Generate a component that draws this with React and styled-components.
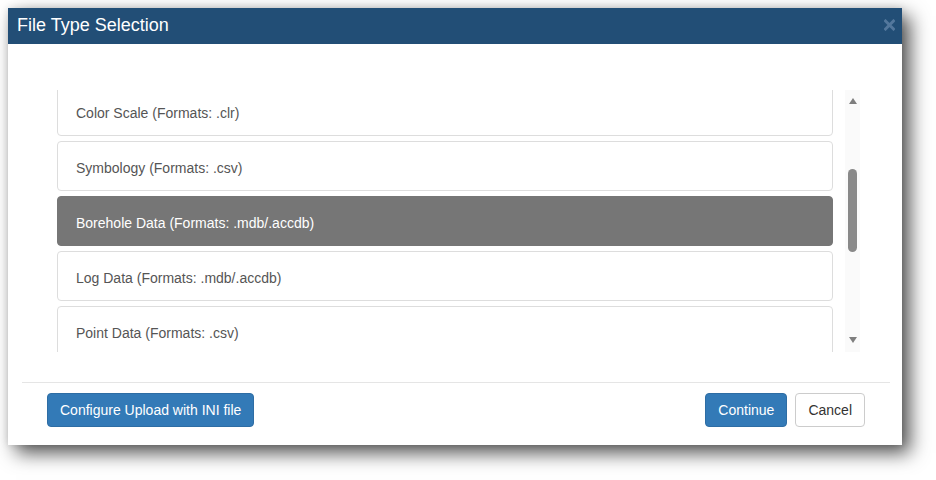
import React from "react";
import styled, { createGlobalStyle } from "styled-components";

const GlobalStyle = createGlobalStyle`
	html, body {
		margin: 0;
		padding: 0;
		background: #ffffff;
		font-family: "Liberation Sans", Arial, sans-serif;
	}
`;

const Page = styled.div`
	width: 936px;
	height: 480px;
	padding: 8px;
	box-sizing: border-box;
	overflow: hidden;
`;

const Modal = styled.div`
	width: 894px;
	height: 437px;
	background: #ffffff;
	display: flex;
	flex-direction: column;
	box-shadow: 8px 8px 18px rgba(0, 0, 0, 0.68), 0 0 8px rgba(0, 0, 0, 0.12);
`;

const Header = styled.div`
	height: 36px;
	box-sizing: border-box;
	padding: 7px 7px 0 9px;
	background: #224e76;
	display: flex;
	justify-content: space-between;
	align-items: flex-start;
`;

const Title = styled.h4`
	margin: 0;
	color: #ffffff;
	font-size: 18px;
	font-weight: normal;
	line-height: 20px;
`;

const CloseButton = styled.button`
	border: none;
	background: none;
	padding: 0;
	margin-top: 4px;
	width: 11px;
	height: 12px;
	display: flex;
	cursor: pointer;
`;

const Body = styled.div`
	padding: 46px 42px 0 49px;
	display: flex;
	flex-direction: row;
	gap: 12px;
`;

const Viewport = styled.div`
	flex: 1;
	height: 262px;
	overflow: hidden;
`;

const ItemList = styled.div`
	display: flex;
	flex-direction: column;
	gap: 5px;
	margin-top: -4px;
`;

const Item = styled.div`
	height: 50px;
	box-sizing: border-box;
	padding: 16px 18px 13px;
	border: 1px solid ${(p) => (p.$active ? "#767676" : "#dddddd")};
	border-radius: 4px;
	background: ${(p) => (p.$active ? "#767676" : "#ffffff")};
	color: ${(p) => (p.$active ? "#ffffff" : "#555555")};
	font-size: 14px;
	line-height: 20px;
	flex-shrink: 0;
`;

const ScrollTrack = styled.div`
	width: 15px;
	height: 262px;
	background: #fafafa;
	display: flex;
	flex-direction: column;
	align-items: center;
`;

const Arrow = styled.div`
	width: 0;
	height: 0;
	border-left: 4.5px solid transparent;
	border-right: 4.5px solid transparent;
	${(p) =>
		p.$down
			? "border-top: 6px solid #7e7e7e; margin-top: auto; margin-bottom: 9px;"
			: "border-bottom: 6px solid #7e7e7e; margin-top: 8px;"}
`;

const Thumb = styled.div`
	width: 9px;
	height: 83px;
	margin-top: 65px;
	border-radius: 5px;
	background: #898989;
`;

const Divider = styled.div`
	margin: 30px 12px 0 14px;
	border-top: 1px solid #e5e5e5;
`;

const Footer = styled.div`
	padding: 10px 37px 0 39px;
	display: flex;
	align-items: center;
	gap: 8px;
`;

const Spacer = styled.div`
	flex: 1;
`;

const Button = styled.button`
	height: 34px;
	box-sizing: border-box;
	padding: 0 12px;
	border-radius: 4px;
	font-family: "Liberation Sans", Arial, sans-serif;
	font-size: 14px;
	line-height: 20px;
	cursor: pointer;
	border: 1px solid ${(p) => (p.$primary ? "#2e6da4" : "#cccccc")};
	background: ${(p) => (p.$primary ? "#337ab7" : "#ffffff")};
	color: ${(p) => (p.$primary ? "#ffffff" : "#333333")};
`;

const fileTypes = [
	{ name: "Color Scale", formats: ".clr" },
	{ name: "Symbology", formats: ".csv" },
	{ name: "Borehole Data", formats: ".mdb/.accdb" },
	{ name: "Log Data", formats: ".mdb/.accdb" },
	{ name: "Point Data", formats: ".csv" },
];

function CloseIcon() {
	return (
		<svg width="11" height="12" viewBox="0 0 11 12">
			<path
				d="M1.5 2 L9.5 10 M9.5 2 L1.5 10"
				stroke="#53779c"
				strokeWidth="3"
				strokeLinecap="square"
			/>
		</svg>
	);
}

export default function App() {
	const selected = "Borehole Data";

	return (
		<>
			<GlobalStyle />
			<Page>
				<Modal>
					<Header>
						<Title>File Type Selection</Title>
						<CloseButton aria-label="Close">
							<CloseIcon />
						</CloseButton>
					</Header>
					<Body>
						<Viewport>
							<ItemList>
								{fileTypes.map((type) => (
									<Item key={type.name} $active={type.name === selected}>
										{type.name} (Formats: {type.formats})
									</Item>
								))}
							</ItemList>
						</Viewport>
						<ScrollTrack>
							<Arrow />
							<Thumb />
							<Arrow $down />
						</ScrollTrack>
					</Body>
					<Divider />
					<Footer>
						<Button $primary>Configure Upload with INI file</Button>
						<Spacer />
						<Button $primary>Continue</Button>
						<Button>Cancel</Button>
					</Footer>
				</Modal>
			</Page>
		</>
	);
}
